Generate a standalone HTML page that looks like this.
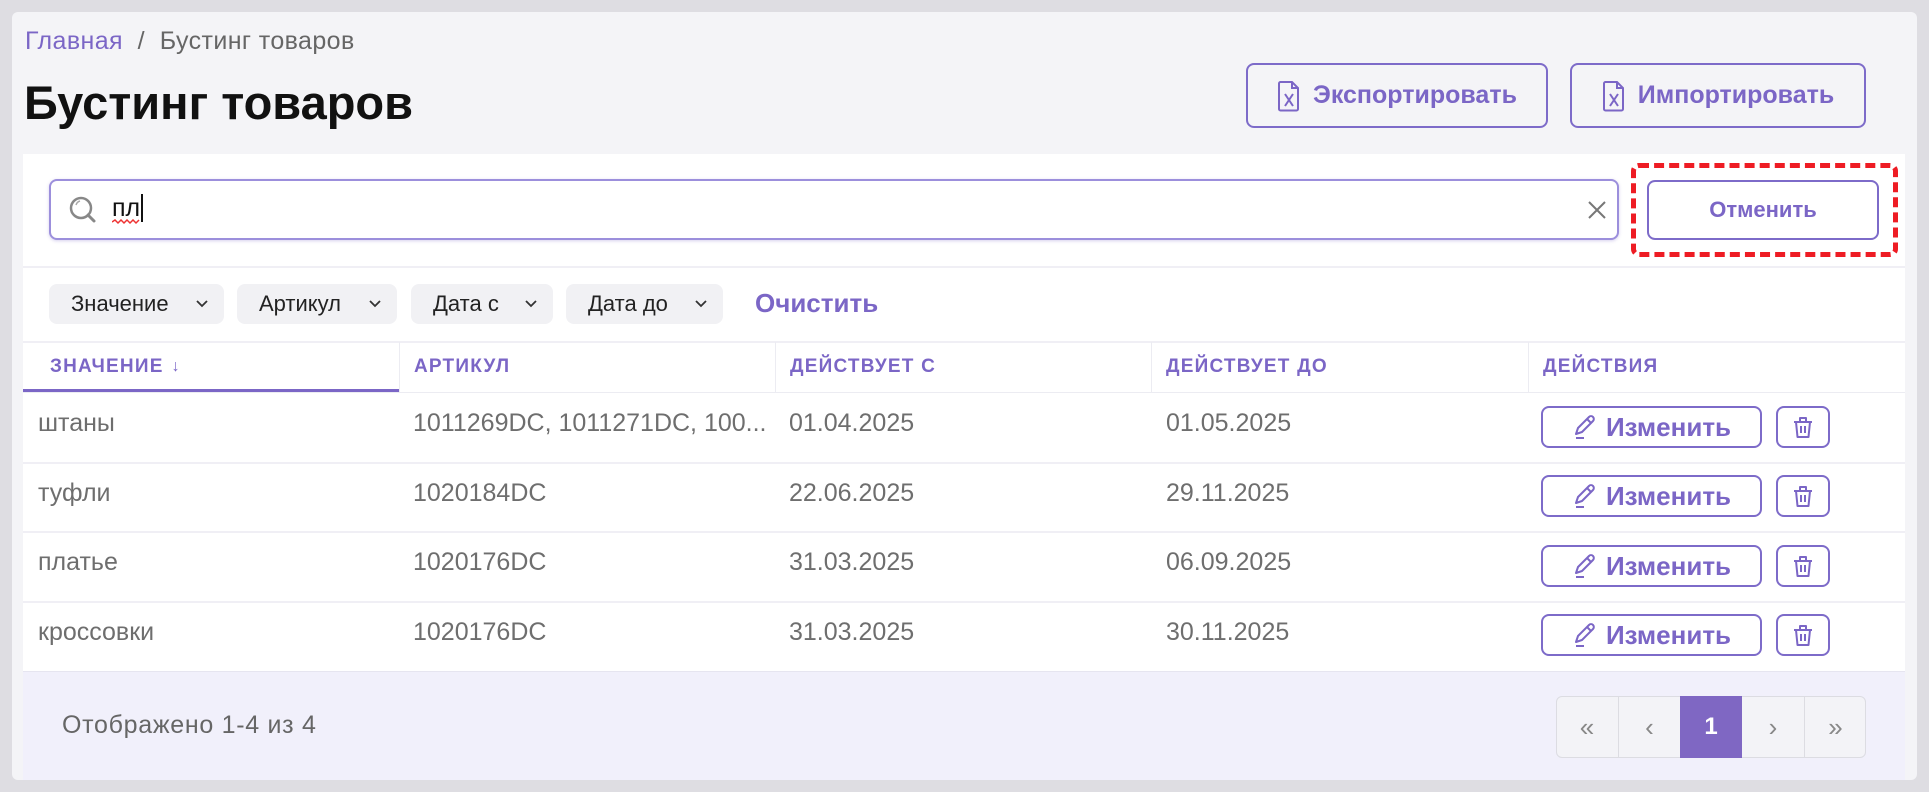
<!DOCTYPE html>
<html><head><meta charset="utf-8"><style>
*{box-sizing:border-box;margin:0;padding:0}
body{width:1929px;height:792px;background:#dedde2;font-family:"Liberation Sans",sans-serif;overflow:hidden;position:relative}
.abs{position:absolute}
.panel{left:12px;top:12px;width:1905px;height:768px;background:#f4f4f7;border-radius:6px}
.pur{color:#7b66c6}
.btn{border:2px solid #7d6bc9;border-radius:8px;background:#fff;display:flex;align-items:center;justify-content:center;color:#7b66c6;font-weight:bold}
.card{left:23px;top:154px;width:1882px;height:626px;background:#fff}
.chip{top:284px;height:40px;background:#f1f1f4;border-radius:8px;font-size:22px;color:#222;display:flex;align-items:center;padding-left:22px}
.chip svg{position:absolute;right:16px;top:16px}
.th{top:342px;height:50px;font-size:19px;letter-spacing:1.2px;font-weight:bold;color:#7b66c6;display:flex;align-items:center;padding-left:14px;border-left:1px solid #ececf2}
.td{font-size:25px;color:#6e6e6e;position:absolute}
.hl{left:23px;width:1882px;height:2px;background:#f0eff5}
.pg{top:696px;height:62px;width:62px;border-left:1px solid #dcdce2;display:flex;align-items:center;justify-content:center;color:#888;font-size:26px}
</style></head><body>
<div class="abs panel"></div>
<div class="abs" style="left:25px;top:27px;font-size:25px;letter-spacing:0.4px;color:#666"><span class="pur">Главная</span>&nbsp; /&nbsp; Бустинг товаров</div>
<div class="abs" style="left:24px;top:75px;font-size:47px;font-weight:bold;color:#111">Бустинг товаров</div>

<div class="abs btn" style="left:1246px;top:63px;width:302px;height:65px;font-size:25px;background:transparent">
<svg width="24" height="32" viewBox="0 0 24 32" style="margin-right:12px"><path d="M3 2h12l6 6v21a1.5 1.5 0 0 1-1.5 1.5h-16A1.5 1.5 0 0 1 2 29V3.5A1.5 1.5 0 0 1 3.5 2z M15 2v6h6" fill="none" stroke="#7b66c6" stroke-width="2"/><path d="M8 14l8 12M16 14l-8 12" stroke="#7b66c6" stroke-width="2"/></svg>Экспортировать</div>
<div class="abs btn" style="left:1570px;top:63px;width:296px;height:65px;font-size:25px;background:transparent">
<svg width="24" height="32" viewBox="0 0 24 32" style="margin-right:12px"><path d="M3 2h12l6 6v21a1.5 1.5 0 0 1-1.5 1.5h-16A1.5 1.5 0 0 1 2 29V3.5A1.5 1.5 0 0 1 3.5 2z M15 2v6h6" fill="none" stroke="#7b66c6" stroke-width="2"/><path d="M8 14l8 12M16 14l-8 12" stroke="#7b66c6" stroke-width="2"/></svg>Импортировать</div>

<div class="abs card"></div>
<div class="abs" style="left:49px;top:179px;width:1570px;height:61px;border:2px solid #9c8fdc;border-radius:8px;background:#fff;box-shadow:0 1px 3px rgba(120,100,200,.3)"></div>
<svg class="abs" style="left:68px;top:195px" width="30" height="30" viewBox="0 0 30 30"><circle cx="13" cy="13" r="10" fill="none" stroke="#888" stroke-width="2.5"/><path d="M20 20l6 6" stroke="#888" stroke-width="3" stroke-linecap="round"/><path d="M8 10a6 6 0 0 1 4-4" stroke="#aaa" stroke-width="1.5" fill="none"/></svg>
<div class="abs" style="left:112px;top:194px;font-size:25px;color:#111">пл<span style="border-left:2px solid #111;margin-left:1px"></span></div>
<svg class="abs" style="left:112px;top:219px" width="28" height="6"><path d="M0 3l3-2 3 3 3-3 3 3 3-3 3 3 3-3 3 3 3-3" stroke="#e33" stroke-width="1.5" fill="none"/></svg>
<svg class="abs" style="left:1587px;top:200px" width="20" height="20"><path d="M2 2l16 16M18 2L2 18" stroke="#777" stroke-width="2"/></svg>
<div class="abs" style="left:1631px;top:163px;width:267px;height:94px;border:5px dashed #ee1c24;border-radius:8px"></div>
<div class="abs btn" style="left:1647px;top:180px;width:232px;height:60px;font-size:22px">Отменить</div>
<div class="abs hl" style="top:266px"></div>

<div class="abs chip" style="left:49px;width:175px">Значение<svg width="12" height="8"><path d="M1 1l5 5 5-5" stroke="#333" stroke-width="1.8" fill="none"/></svg></div>
<div class="abs chip" style="left:237px;width:160px">Артикул<svg width="12" height="8"><path d="M1 1l5 5 5-5" stroke="#333" stroke-width="1.8" fill="none"/></svg></div>
<div class="abs chip" style="left:411px;width:142px">Дата с<svg width="12" height="8"><path d="M1 1l5 5 5-5" stroke="#333" stroke-width="1.8" fill="none"/></svg></div>
<div class="abs chip" style="left:566px;width:157px">Дата до<svg width="12" height="8"><path d="M1 1l5 5 5-5" stroke="#333" stroke-width="1.8" fill="none"/></svg></div>
<div class="abs pur" style="left:755px;top:288px;font-size:26px;font-weight:bold">Очистить</div>
<div class="abs hl" style="top:341px"></div>

<div class="abs th" style="left:23px;width:376px;border-left:none;padding-left:27px">ЗНАЧЕНИЕ <span style="font-weight:normal;margin-left:8px;font-size:16px">↓</span></div>
<div class="abs th" style="left:399px;width:376px">АРТИКУЛ</div>
<div class="abs th" style="left:775px;width:376px">ДЕЙСТВУЕТ С</div>
<div class="abs th" style="left:1151px;width:377px">ДЕЙСТВУЕТ ДО</div>
<div class="abs th" style="left:1528px;width:377px">ДЕЙСТВИЯ</div>
<div class="abs" style="left:23px;top:389px;width:376px;height:3px;background:#7b66c6"></div>
<div class="abs hl" style="top:392px;height:1px;background:#ececf2"></div>

<div class="td" style="left:38px;top:409px">штаны</div><div class="td" style="left:413px;top:409px">1011269DC, 1011271DC, 100...</div><div class="td" style="left:789px;top:409px">01.04.2025</div><div class="td" style="left:1166px;top:409px">01.05.2025</div>
<div class="abs hl" style="top:462px"></div>
<div class="td" style="left:38px;top:479px">туфли</div><div class="td" style="left:413px;top:479px">1020184DC</div><div class="td" style="left:789px;top:479px">22.06.2025</div><div class="td" style="left:1166px;top:479px">29.11.2025</div>
<div class="abs hl" style="top:531px"></div>
<div class="td" style="left:38px;top:548px">платье</div><div class="td" style="left:413px;top:548px">1020176DC</div><div class="td" style="left:789px;top:548px">31.03.2025</div><div class="td" style="left:1166px;top:548px">06.09.2025</div>
<div class="abs hl" style="top:601px"></div>
<div class="td" style="left:38px;top:618px">кроссовки</div><div class="td" style="left:413px;top:618px">1020176DC</div><div class="td" style="left:789px;top:618px">31.03.2025</div><div class="td" style="left:1166px;top:618px">30.11.2025</div>

<div id="acts"></div>
<div class="abs" style="left:23px;top:671px;width:1882px;height:109px;background:#f1f0fb;border-top:1px solid #e6e5f0"></div>
<div class="abs" style="left:62px;top:711px;font-size:25px;letter-spacing:0.7px;color:#666">Отображено 1-4 из 4</div>
<div class="abs" style="left:1556px;top:696px;width:310px;height:62px;border:1px solid #dcdce2;border-radius:6px;background:#f3f3f7"></div>
<div class="abs pg" style="left:1556px;border-left:none">«</div>
<div class="abs pg" style="left:1618px">‹</div>
<div class="abs pg" style="left:1680px;background:#7f67c3;color:#fff;font-weight:bold;font-size:24px;border-left:none">1</div>
<div class="abs pg" style="left:1742px;border-left:none">›</div>
<div class="abs pg" style="left:1804px">»</div>

<script>
var h='';[406,475,545,614].forEach(function(t){
h+='<div class="abs btn" style="left:1541px;top:'+t+'px;width:221px;height:42px;font-size:26px"><svg width="26" height="26" viewBox="0 0 26 26" style="margin-right:8px"><path d="M4 20l2-6L17 3a2.5 2.5 0 0 1 4 4L10 18z M15 5l4 4 M4 24h8" fill="none" stroke="#7b66c6" stroke-width="2" stroke-linejoin="round"/></svg>Изменить</div>';
h+='<div class="abs btn" style="left:1776px;top:'+t+'px;width:54px;height:42px"><svg width="22" height="26" viewBox="0 0 22 26"><path d="M2 8h18 M8 8V4h6v4 M4 8l1.5 15h11L18 8 M9 12v7 M13 12v7" fill="none" stroke="#7b66c6" stroke-width="2" stroke-linejoin="round"/></svg></div>';
});document.getElementById('acts').innerHTML=h;
</script>
</body></html>
